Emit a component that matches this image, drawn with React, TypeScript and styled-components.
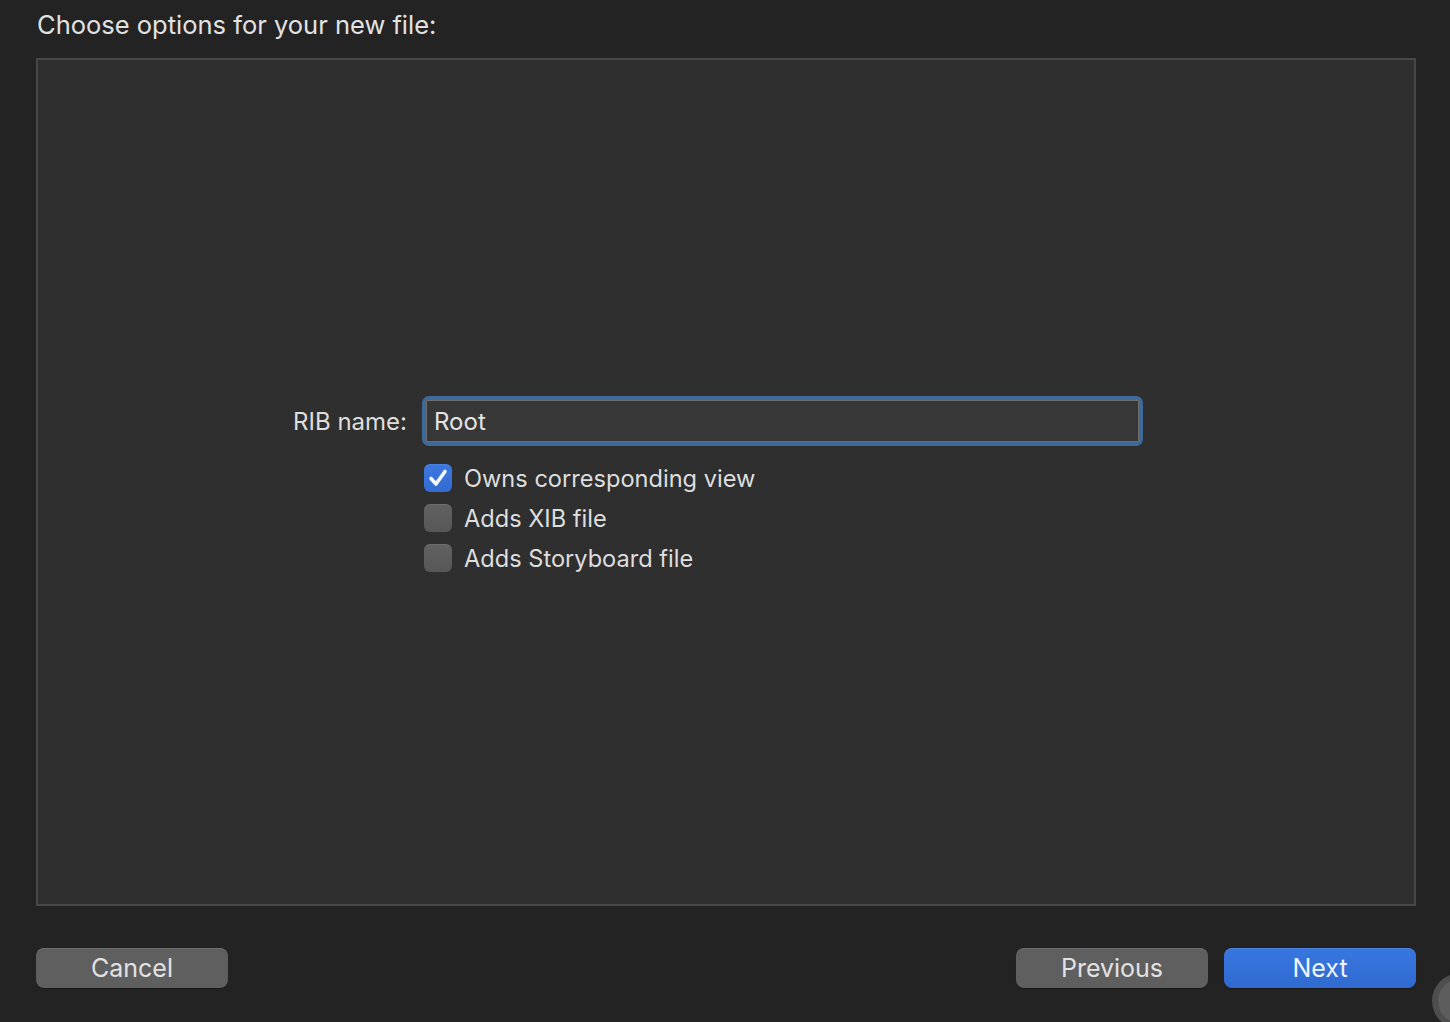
import React from 'react';
import styled, { createGlobalStyle } from 'styled-components';

const GlobalStyle = createGlobalStyle`
  html, body {
    margin: 0;
    padding: 0;
    background: #232323;
  }
  body {
    font-family: Inter, "Noto Sans", "Liberation Sans", sans-serif;
    color: #dedede;
    -webkit-font-smoothing: antialiased;
  }
`;

const Window = styled.div`
  position: relative;
  width: 1450px;
  height: 1022px;
  box-sizing: border-box;
  padding: 0 34px 0 36px;
  display: flex;
  flex-direction: column;
  overflow: hidden;
`;

const Heading = styled.div`
  height: 58px;
  padding-left: 1px;
  display: flex;
  align-items: center;
  font-size: 25.5px;
  line-height: 1;
  color: #e2e2e2;
  padding-bottom: 8px;
  box-sizing: border-box;
`;

const Panel = styled.div`
  height: 848px;
  box-sizing: border-box;
  border: 2px solid #474747;
  background: #2f2f2f;
  display: flex;
  align-items: center;
  padding: 4px 0 0 238px;
`;

const Form = styled.div`
  display: grid;
  grid-template-columns: 131px 721px;
  column-gap: 15px;
  row-gap: 18px;
  align-items: center;
`;

const FieldLabel = styled.label`
  text-align: right;
  font-size: 24px;
  color: #dedede;
`;

const TextField = styled.div`
  height: 50px;
  box-sizing: border-box;
  border: 4px solid #3d6a98;
  border-radius: 7px;
  display: flex;
`;

const FieldInner = styled.div`
  flex: 1;
  border: 1px solid #6c6c6c;
  background: #373737;
  display: flex;
  align-items: center;
  padding-left: 7px;
  font-size: 24px;
  color: #e4e4e4;
`;

const Options = styled.div`
  grid-column: 2;
  display: flex;
  flex-direction: column;
  gap: 12px;
  padding-left: 2px;
`;

const OptionRow = styled.div`
  display: flex;
  align-items: center;
  gap: 12px;
  height: 28px;
  font-size: 23.6px;
  color: #dedede;
`;

const Box = styled.span<{ $checked?: boolean }>`
  width: 28px;
  height: 28px;
  box-sizing: border-box;
  border-radius: 6px;
  display: flex;
  align-items: center;
  justify-content: center;
  background: ${({ $checked }) =>
    $checked ? 'linear-gradient(#3b78e0, #346cd0)' : 'linear-gradient(#616161, #575757)'};
  box-shadow: inset 0 1px 0 rgba(255, 255, 255, 0.08);
`;

const Footer = styled.div`
  flex: 1;
  display: flex;
  align-items: center;
  justify-content: space-between;
  padding-top: 8px;
`;

const ButtonGroup = styled.div`
  display: flex;
  gap: 16px;
`;

const Button = styled.button<{ $primary?: boolean }>`
  width: 192px;
  height: 40px;
  border: none;
  border-radius: 8px;
  font-family: inherit;
  font-size: 25px;
  color: ${({ $primary }) => ($primary ? '#eef3fc' : '#e2e2e2')};
  background: ${({ $primary }) => ($primary ? 'linear-gradient(#3877e0, #306acf)' : '#5f5f5f')};
  box-shadow: inset 0 1px 0 rgba(255, 255, 255, 0.1), 0 1px 1px rgba(0, 0, 0, 0.3);
  padding: 0;
`;

const CornerKnob = styled.div`
  position: absolute;
  left: 1432px;
  top: 973px;
  width: 56px;
  height: 56px;
  border-radius: 50%;
  background: #4e4e4e;
  display: flex;
  align-items: center;
  justify-content: center;
  &::after {
    content: '';
    width: 44px;
    height: 44px;
    border-radius: 50%;
    background: #5d5d5d;
  }
`;

const Check = () => (
  <svg width="22" height="22" viewBox="0 0 22 22">
    <path d="M4 11.5 L9 17 L18 4.5" fill="none" stroke="#f4f7fd" strokeWidth="3.6" strokeLinecap="round" strokeLinejoin="round" />
  </svg>
);

const options = [
  { label: 'Owns corresponding view', checked: true },
  { label: 'Adds XIB file', checked: false },
  { label: 'Adds Storyboard file', checked: false },
];

export default function App() {
  return (
    <>
      <GlobalStyle />
      <Window>
        <Heading>Choose options for your new file:</Heading>
        <Panel>
          <Form>
            <FieldLabel>RIB name:</FieldLabel>
            <TextField>
              <FieldInner>Root</FieldInner>
            </TextField>
            <Options>
              {options.map((o) => (
                <OptionRow key={o.label}>
                  <Box $checked={o.checked}>{o.checked && <Check />}</Box>
                  {o.label}
                </OptionRow>
              ))}
            </Options>
          </Form>
        </Panel>
        <Footer>
          <Button>Cancel</Button>
          <ButtonGroup>
            <Button>Previous</Button>
            <Button $primary>Next</Button>
          </ButtonGroup>
        </Footer>
        <CornerKnob />
      </Window>
    </>
  );
}
